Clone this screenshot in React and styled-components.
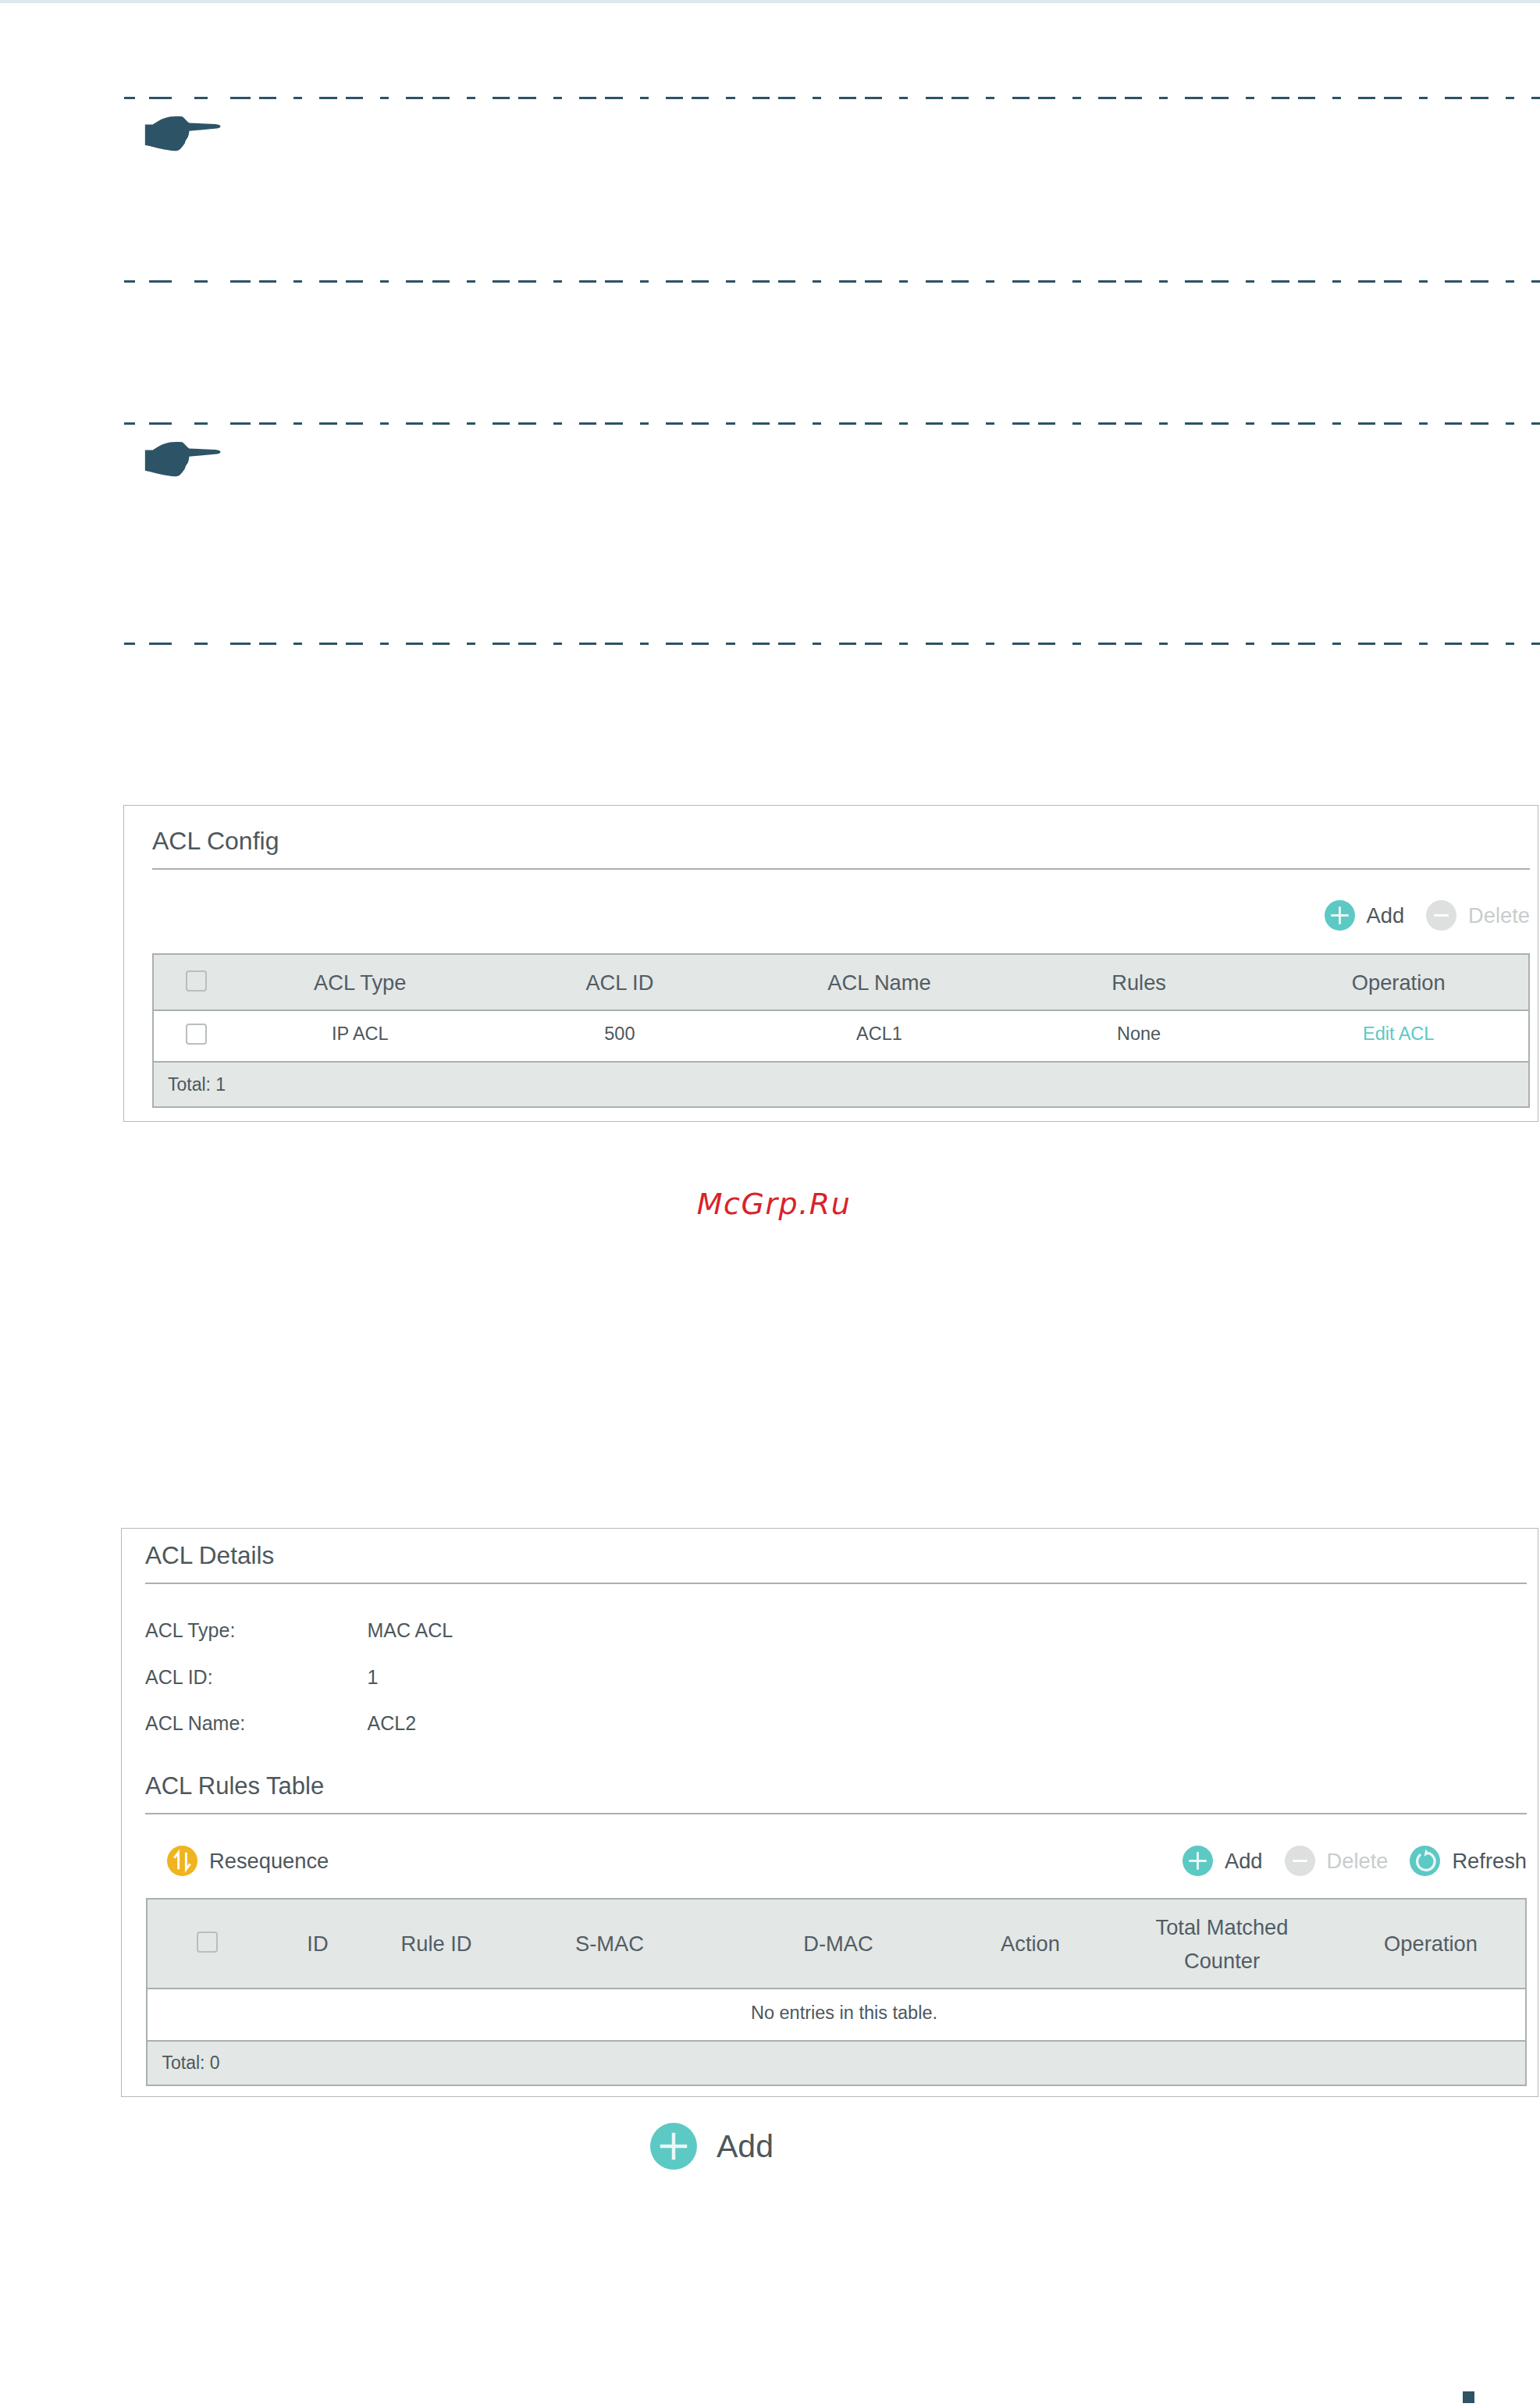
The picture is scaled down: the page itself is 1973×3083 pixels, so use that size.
import React from 'react'
import styled, { createGlobalStyle } from 'styled-components'

const INK = '#2d5366'
const TEAL = '#5cc9c4'
const LINE = '#a9b0b1'
const HEAD = '#e3e7e6'
const TEXT = '#4d575c'

const GlobalStyle = createGlobalStyle`
	html, body {
		margin: 0;
		padding: 0;
		background: #fff;
	}
	body {
		font-family: "Liberation Sans", Arial, sans-serif;
		color: ${TEXT};
	}
	* {
		box-sizing: border-box;
	}
`

const Page = styled.div`
	width: 1973px;
	height: 3083px;
	overflow: hidden;
`

const TopBar = styled.div`
	height: 4px;
	background: #dde8ec;
`

const Note = styled.section`
	margin-top: ${props => props.$top}px;
	margin-left: 159px;
	height: ${props => props.$height}px;
	display: flex;
	flex-direction: column;
	justify-content: space-between;
`

// the dashes of the rule are uneven at the start, then repeat every 110.9px
const DashRule = styled.div`
	height: 3px;
	background-color: transparent;
	background-image:
		linear-gradient(90deg,
			${INK} 0 14px, transparent 14px 32px,
			${INK} 32px 61px, transparent 61px 90px,
			${INK} 90px 107px, transparent 107px 136px,
			${INK} 136px 162px, transparent 162px 173px,
			${INK} 173px 195px, transparent 195px 217px),
		repeating-linear-gradient(90deg,
			${INK} 0 11px, transparent 11px 33.3px,
			${INK} 33.3px 55.6px, transparent 55.6px 66.6px,
			${INK} 66.6px 88.8px, transparent 88.8px 110.9px);
	background-size: 217px 100%, calc(100% - 217px) 100%;
	background-position: left top, right top;
	background-repeat: no-repeat;
`

const HandMark = styled.svg`
	display: block;
	width: 102px;
	height: 48px;
	margin: 20px 0 0 24px;
	flex: none;
`

const NoteBody = styled.div`
	flex: 1;
`

const Panel = styled.section`
	margin-top: ${props => props.$top}px;
	margin-left: ${props => props.$left}px;
	width: ${props => 1971 - props.$left}px;
	border: 1px solid #b8b8b8;
	padding: 0 ${props => props.$right}px ${props => props.$bottom}px ${props => props.$inset}px;
	background: #fff;
`

const SectionTitle = styled.h2`
	margin: ${props => props.$margin || 0}px 0 0;
	padding-top: ${props => props.$padTop}px;
	padding-bottom: ${props => props.$padBottom}px;
	font-size: ${props => props.$size}px;
	font-weight: 400;
	line-height: 36px;
	color: ${TEXT};
	border-bottom: 2px solid ${LINE};
`

const Toolbar = styled.div`
	display: flex;
	align-items: center;
	justify-content: ${props => (props.$split ? 'space-between' : 'flex-end')};
	height: 39px;
	margin-top: ${props => props.$top}px;
	margin-bottom: ${props => props.$bottom}px;
	padding-left: ${props => (props.$split ? 28 : 0)}px;
`

const ToolGroup = styled.div`
	display: flex;
	align-items: center;
	gap: 28px;
`

const Tool = styled.div`
	display: flex;
	align-items: center;
	gap: 15px;
	font-size: 27.3px;
	white-space: nowrap;
	color: ${props => (props.$disabled ? '#c8cccd' : TEXT)};
`

const ToolGlyph = styled.svg`
	display: block;
	flex: none;
	width: ${props => props.$size || 39}px;
	height: ${props => props.$size || 39}px;
`

const Table = styled.div`
	border: 2px solid ${LINE};
	margin-left: ${props => props.$left || 0}px;
`

const HeadRow = styled.div`
	display: grid;
	grid-template-columns: ${props => props.$columns};
	align-items: center;
	height: ${props => props.$height}px;
	padding-right: ${props => props.$padRight || 0}px;
	background: ${HEAD};
	border-bottom: 2px solid ${LINE};
	font-size: 27.3px;
	line-height: 43px;
	text-align: center;
	color: #525d64;
`

const BodyRow = styled.div`
	display: grid;
	grid-template-columns: ${props => props.$columns};
	align-items: center;
	height: 66px;
	padding-bottom: 5px;
	border-bottom: 2px solid ${LINE};
	font-size: 23.5px;
	text-align: center;
`

const EmptyRow = styled.div`
	display: flex;
	align-items: center;
	justify-content: center;
	height: 67px;
	padding: 0 0 4px 20px;
	border-bottom: 2px solid ${LINE};
	font-size: 23.5px;
`

const FootRow = styled.div`
	display: flex;
	align-items: center;
	height: ${props => props.$height}px;
	padding-left: ${props => props.$left}px;
	background: ${HEAD};
	font-size: 23px;
`

const CheckCell = styled.div`
	display: flex;
	justify-content: center;
	padding-left: ${props => props.$left || 0}px;
`

const Check = styled.span`
	display: block;
	width: 27px;
	height: 27px;
	margin-top: ${props => props.$lift || 0}px;
	border: 2px solid #b9bebf;
	border-radius: 4px;
	background: ${props => (props.$head ? 'transparent' : '#fff')};
`

const EditLink = styled.a`
	color: ${TEAL};
	text-decoration: none;
`

const Watermark = styled.div`
	margin-top: 83px;
	padding-left: 10px;
	height: 44px;
	line-height: 44px;
	text-align: center;
	font-family: "DejaVu Sans", sans-serif;
	font-style: italic;
	font-size: 38px;
	letter-spacing: 1.5px;
	color: #d8232a;
`

const Fields = styled.dl`
	display: grid;
	grid-template-columns: 284.5px 1fr;
	grid-auto-rows: 59.5px;
	align-items: center;
	margin: 30px 0 0;
	font-size: 25px;

	dt, dd {
		margin: 0;
	}
`

const BigAdd = styled.div`
	display: flex;
	align-items: center;
	gap: 25px;
	margin: 33px 0 0 833px;
	height: 60px;
	font-size: 41px;
	color: ${TEXT};
`

const PageMark = styled.div`
	width: 15px;
	height: 15px;
	margin: 284px 0 0 1874px;
	background: ${INK};
`

const Hand = () => (
	<HandMark viewBox="100 110 305 145">
		<path
			fill={INK}
			d="M107 148 L137 148 C150 138 175 122 200 118 C220 116 240 116 250 117 C258 120 268 135 278 142 L380 146 C392 147 400 151 399 155 C398 160 392 162 385 163 L278 173 C277 182 276 190 272 198 C266 205 263 212 261 220 C255 228 246 241 240 245 C233 250 222 250 210 249 C190 247 150 238 135 234 C125 231 115 229 107 228 Z"
		/>
	</HandMark>
)

const AddIcon = ({ size }) => (
	<ToolGlyph viewBox="0 0 40 40" $size={size}>
		<circle cx="20" cy="20" r="20" fill={TEAL} />
		<path d="M20 8.5 V31.5 M8.5 20 H31.5" stroke="#e9f8f7" strokeWidth="3" fill="none" />
	</ToolGlyph>
)

const DeleteIcon = () => (
	<ToolGlyph viewBox="0 0 40 40">
		<circle cx="20" cy="20" r="20" fill="#dedfdf" />
		<path d="M10.5 20 H29.5" stroke="#fff" strokeWidth="3" fill="none" />
	</ToolGlyph>
)

const RefreshIcon = () => (
	<ToolGlyph viewBox="0 0 40 40">
		<circle cx="20" cy="20" r="20" fill={TEAL} />
		<path d="M14.5 11.5 A11.5 11.5 0 1 0 24 9.5" stroke="#e9f8f7" strokeWidth="3.4" fill="none" />
		<path d="M21 4.5 L25.5 10.5 L19 14 Z" fill="#e9f8f7" />
	</ToolGlyph>
)

const ResequenceIcon = () => (
	<ToolGlyph viewBox="0 0 40 40">
		<circle cx="20" cy="20" r="20" fill="#f0b41f" />
		<path d="M15 31 V9 L9.5 16" stroke="#fff" strokeWidth="3" fill="none" />
		<path d="M25 9 V31 L30.5 24" stroke="#fff" strokeWidth="3" fill="none" />
	</ToolGlyph>
)

const configColumns = '98px repeat(5, 1fr)'
const rulesColumns = '153px 130px 174px 270px 316px 176px 315px 220px'

const configHead = ['ACL Type', 'ACL ID', 'ACL Name', 'Rules', 'Operation']
const rulesHead = ['ID', 'Rule ID', 'S-MAC', 'D-MAC', 'Action']

export default function App() {
	return (
		<Page>
			<GlobalStyle />
			<TopBar />

			<Note $top={120} $height={238}>
				<DashRule />
				<NoteBody>
					<Hand />
				</NoteBody>
				<DashRule />
			</Note>

			<Note $top={179} $height={285}>
				<DashRule />
				<NoteBody>
					<Hand />
				</NoteBody>
				<DashRule />
			</Note>

			<Panel $top={205} $left={158} $inset={36} $right={10} $bottom={17}>
				<SectionTitle $size={32} $padTop={27} $padBottom={17}>ACL Config</SectionTitle>
				<Toolbar $top={39} $bottom={29}>
					<ToolGroup>
						<Tool><AddIcon />Add</Tool>
						<Tool $disabled><DeleteIcon />Delete</Tool>
					</ToolGroup>
				</Toolbar>
				<Table>
					<HeadRow $columns={configColumns} $height={72}>
						<CheckCell $left={10}><Check $head $lift={-4} /></CheckCell>
						{configHead.map(label => <div key={label}>{label}</div>)}
					</HeadRow>
					<BodyRow $columns={configColumns}>
						<CheckCell $left={10}><Check /></CheckCell>
						<div>IP ACL</div>
						<div>500</div>
						<div>ACL1</div>
						<div>None</div>
						<div><EditLink>Edit ACL</EditLink></div>
					</BodyRow>
					<FootRow $height={56} $left={18}>Total: 1</FootRow>
				</Table>
			</Panel>

			<Watermark>McGrp.Ru</Watermark>

			<Panel $top={393} $left={155} $inset={30} $right={14} $bottom={13}>
				<SectionTitle $size={31.5} $padTop={15.5} $padBottom={17.5}>ACL Details</SectionTitle>
				<Fields>
					<dt>ACL Type:</dt>
					<dd>MAC ACL</dd>
					<dt>ACL ID:</dt>
					<dd>1</dd>
					<dt>ACL Name:</dt>
					<dd>ACL2</dd>
				</Fields>
				<SectionTitle $size={31} $margin={32} $padBottom={16.5}>ACL Rules Table</SectionTitle>
				<Toolbar $split $top={40} $bottom={28}>
					<Tool><ResequenceIcon />Resequence</Tool>
					<ToolGroup>
						<Tool><AddIcon />Add</Tool>
						<Tool $disabled><DeleteIcon />Delete</Tool>
						<Tool><RefreshIcon />Refresh</Tool>
					</ToolGroup>
				</Toolbar>
				<Table $left={1}>
					<HeadRow $columns={rulesColumns} $height={115} $padRight={11}>
						<CheckCell><Check $head $lift={-5} /></CheckCell>
						{rulesHead.map(label => <div key={label}>{label}</div>)}
						<div>Total Matched<br />Counter</div>
						<div>Operation</div>
					</HeadRow>
					<EmptyRow>No entries in this table.</EmptyRow>
					<FootRow $height={55} $left={18.5}>Total: 0</FootRow>
				</Table>
			</Panel>

			<BigAdd><AddIcon size={60} />Add</BigAdd>

			<PageMark />
		</Page>
	)
}
